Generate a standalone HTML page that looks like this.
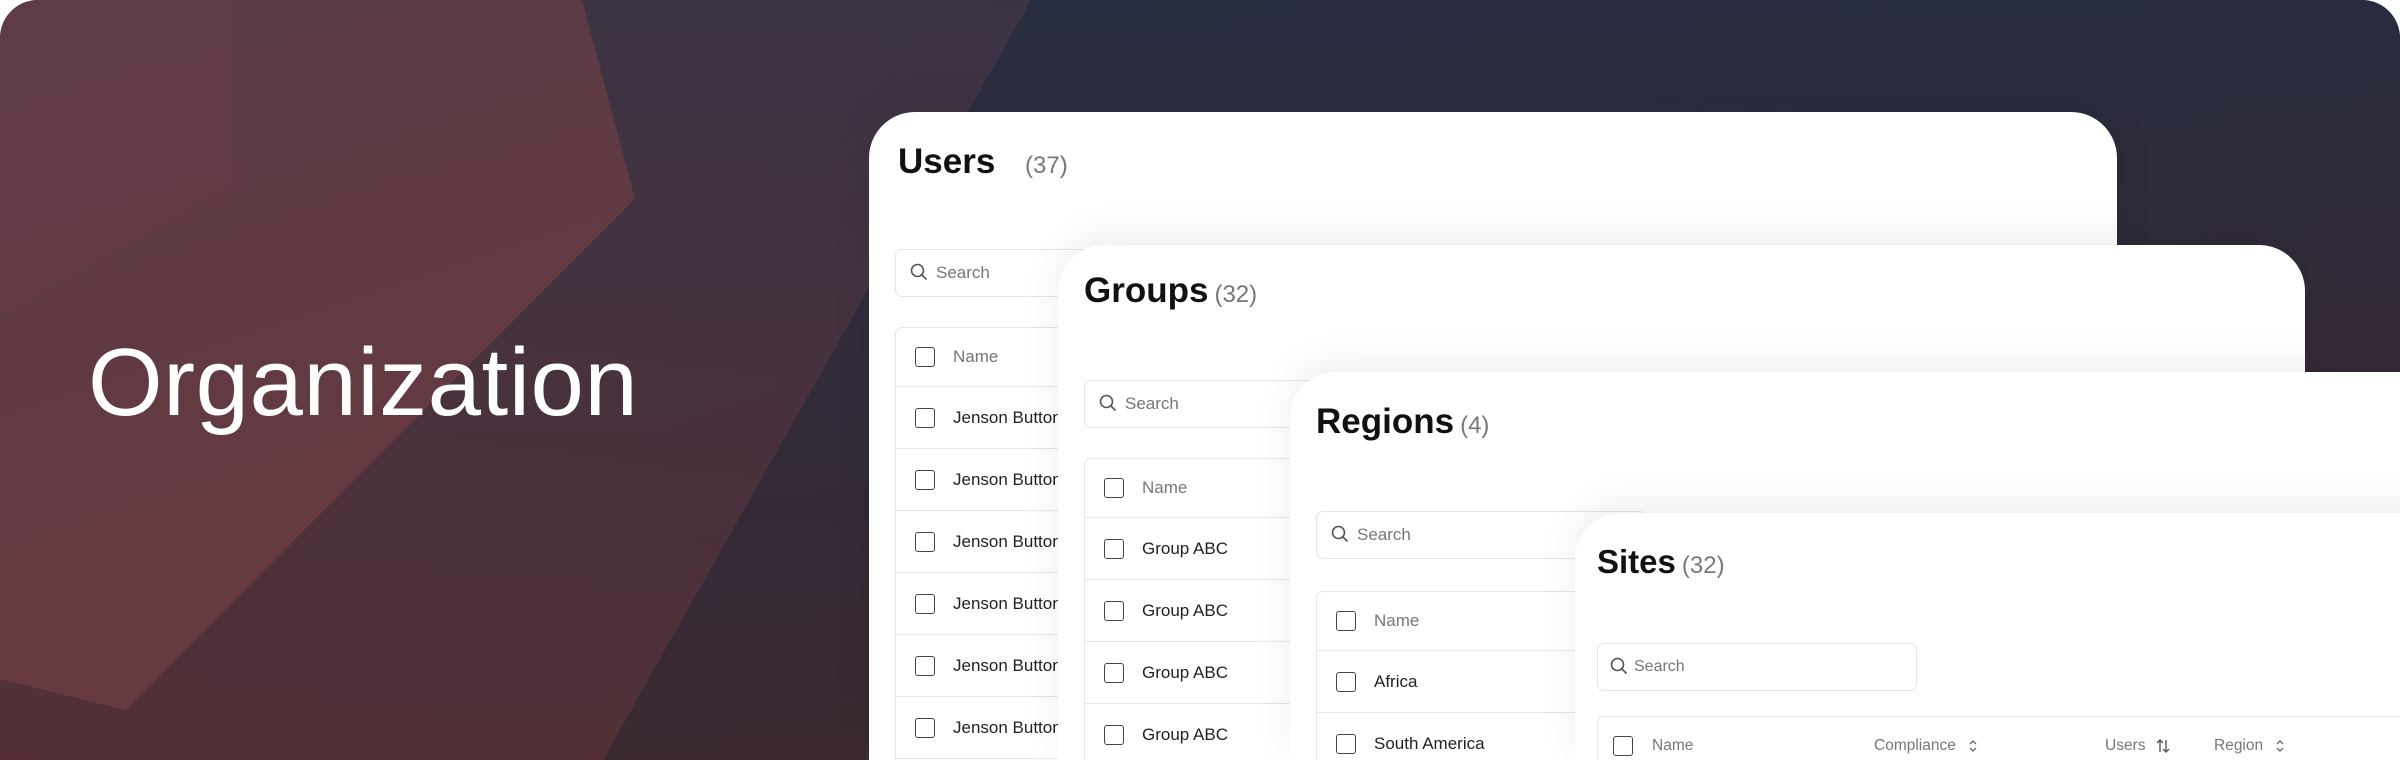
<!DOCTYPE html>
<html><head><meta charset="utf-8"><style>
*{margin:0;padding:0;box-sizing:border-box}
html,body{width:2400px;height:760px;background:#fff;overflow:hidden}
body{font-family:"Liberation Sans",sans-serif}
#wrap{position:absolute;left:0;top:0;width:2400px;height:760px;border-radius:38px 38px 0 0;overflow:hidden;background:linear-gradient(160deg,#4a3440 0%,#3a3040 35%,#2a2e40 55%,#3a2a34 80%,#4c2a2e 100%)}
#bg{position:absolute;left:0;top:0}
.h1{position:absolute;left:88px;top:318px;font-size:96px;color:#fff;font-weight:400;line-height:130px;letter-spacing:0.5px}
.card{position:absolute;background:#fff;border-radius:46px 46px 0 0;box-shadow:0 -10px 40px rgba(0,0,0,0.07);bottom:0;overflow:hidden}
.title{position:absolute;font-size:35px;font-weight:700;color:#111;line-height:40px;white-space:nowrap}
.title span{font-weight:400;font-size:24px;color:#777;margin-left:6px}
.search{position:absolute;height:48px;border:1.5px solid #e4e4e4;border-radius:7px;background:#fff;font-size:17px;color:#777;line-height:45px;padding-left:40px}
.search svg{position:absolute;left:14px;top:13px}
.table{position:absolute;border:1.5px solid #e6e6e6;border-bottom:none;border-radius:7px 7px 0 0;background:#fff;bottom:0;overflow:hidden}
.row{position:relative;height:62px;border-bottom:1.5px solid #e6e6e6;font-size:17px;color:#222}
.row.hd{height:59px;color:#777}
.cb{position:absolute;left:19px;top:50%;margin-top:-10px;width:20px;height:20px;border:1.6px solid #444;border-radius:3px}
.row .t{position:absolute;left:57px;top:0;bottom:0;display:flex;align-items:center;white-space:nowrap}
.t svg{margin-left:12px}
</style></head><body>
<div id="wrap">
<svg id="bg" width="2400" height="760" viewBox="0 0 2400 760">
<defs>
<linearGradient id="g1" x1="0" y1="0" x2="0.3" y2="1"><stop offset="0" stop-color="#5c3c48"/><stop offset="1" stop-color="#7a3d3e"/></linearGradient>
<linearGradient id="g2" x1="0" y1="0" x2="0" y2="1"><stop offset="0" stop-color="#3a3446"/><stop offset="1" stop-color="#5c3034"/></linearGradient>
<linearGradient id="g3" x1="0" y1="0" x2="0.2" y2="1"><stop offset="0" stop-color="#212c42"/><stop offset="1" stop-color="#40282e"/></linearGradient>
</defs>
<polygon points="1031,0 2400,0 2400,760 603,760" fill="url(#g3)" opacity="0.8"/>
<polygon points="582,0 1031,0 603,760 0,760 0,679 125,710 635,199" fill="url(#g2)" opacity="0.8"/>
<polygon points="0,0 582,0 635,199 125,710 0,679" fill="url(#g1)" opacity="0.75"/>
<polygon points="0,0 232,0 232,183 0,315" fill="#6a4048" opacity="0.35"/>
</svg>
<div class="h1">Organization</div>

<!-- Users -->
<div class="card" style="left:869px;top:112px;width:1248px">
 <div class="title" style="left:29px;top:30px">Users <span style="margin-left:20px">(37)</span></div>
 <div class="search" style="left:26px;top:137px;width:330px"><svg width="18" height="18" viewBox="0 0 18 18"><circle cx="7.5" cy="7.5" r="6" fill="none" stroke="#555" stroke-width="1.6"/><path d="M12 12l4.5 4.5" stroke="#555" stroke-width="1.6"/></svg>Search</div>
 <div class="table" style="left:26px;top:215px;width:1190px">
  <div class="row hd"><div class="cb"></div><div class="t">Name</div></div>
  <div class="row"><div class="cb"></div><div class="t">Jenson Button</div></div>
  <div class="row"><div class="cb"></div><div class="t">Jenson Button</div></div>
  <div class="row"><div class="cb"></div><div class="t">Jenson Button</div></div>
  <div class="row"><div class="cb"></div><div class="t">Jenson Button</div></div>
  <div class="row"><div class="cb"></div><div class="t">Jenson Button</div></div>
  <div class="row"><div class="cb"></div><div class="t">Jenson Button</div></div>
 </div>
</div>

<!-- Groups -->
<div class="card" style="left:1058px;top:245px;width:1247px">
 <div class="title" style="left:26px;top:26px">Groups<span>(32)</span></div>
 <div class="search" style="left:26px;top:135px;width:330px"><svg width="18" height="18" viewBox="0 0 18 18"><circle cx="7.5" cy="7.5" r="6" fill="none" stroke="#555" stroke-width="1.6"/><path d="M12 12l4.5 4.5" stroke="#555" stroke-width="1.6"/></svg>Search</div>
 <div class="table" style="left:26px;top:213px;width:1190px">
  <div class="row hd"><div class="cb"></div><div class="t">Name</div></div>
  <div class="row"><div class="cb"></div><div class="t">Group ABC</div></div>
  <div class="row"><div class="cb"></div><div class="t">Group ABC</div></div>
  <div class="row"><div class="cb"></div><div class="t">Group ABC</div></div>
  <div class="row"><div class="cb"></div><div class="t">Group ABC</div></div>
 </div>
</div>

<!-- Regions -->
<div class="card" style="left:1290px;top:372px;width:1200px">
 <div class="title" style="left:26px;top:30px">Regions<span>(4)</span></div>
 <div class="search" style="left:26px;top:139px;width:330px"><svg width="18" height="18" viewBox="0 0 18 18"><circle cx="7.5" cy="7.5" r="6" fill="none" stroke="#555" stroke-width="1.6"/><path d="M12 12l4.5 4.5" stroke="#555" stroke-width="1.6"/></svg>Search</div>
 <div class="table" style="left:26px;top:219px;width:1150px">
  <div class="row hd"><div class="cb"></div><div class="t">Name</div></div>
  <div class="row"><div class="cb"></div><div class="t">Africa</div></div>
  <div class="row"><div class="cb"></div><div class="t">South America</div></div>
 </div>
</div>

<!-- Sites -->
<div class="card" style="left:1575px;top:513px;width:900px">
 <div class="title" style="left:22px;top:29px;font-size:33px">Sites<span>(32)</span></div>
 <div class="search" style="left:22px;top:130px;width:320px;font-size:16px;padding-left:36px"><svg width="18" height="18" viewBox="0 0 18 18" style="left:12px"><circle cx="7.5" cy="7.5" r="6" fill="none" stroke="#555" stroke-width="1.6"/><path d="M12 12l4.5 4.5" stroke="#555" stroke-width="1.6"/></svg>Search</div>
 <div class="table" style="left:22px;top:203px;width:900px">
  <div class="row hd" style="font-size:15.5px">
   <div class="cb" style="left:15px"></div>
   <div class="t" style="left:54px">Name</div>
   <div class="t" style="left:276px">Compliance<svg width="10" height="16" viewBox="0 0 10 16"><path d="M2 6l3-3 3 3M2 10l3 3 3-3" fill="none" stroke="#666" stroke-width="1.3"/></svg></div>
   <div class="t" style="left:507px">Users<svg width="16" height="16" viewBox="0 0 16 16" style="margin-left:10px"><path d="M5 14V2M2 5l3-3 3 3M11 2v12M8 11l3 3 3-3" fill="none" stroke="#555" stroke-width="1.4"/></svg></div>
   <div class="t" style="left:616px">Region<svg width="10" height="16" viewBox="0 0 10 16"><path d="M2 6l3-3 3 3M2 10l3 3 3-3" fill="none" stroke="#666" stroke-width="1.3"/></svg></div>
  </div>
 </div>
</div>
</div>
</body></html>
